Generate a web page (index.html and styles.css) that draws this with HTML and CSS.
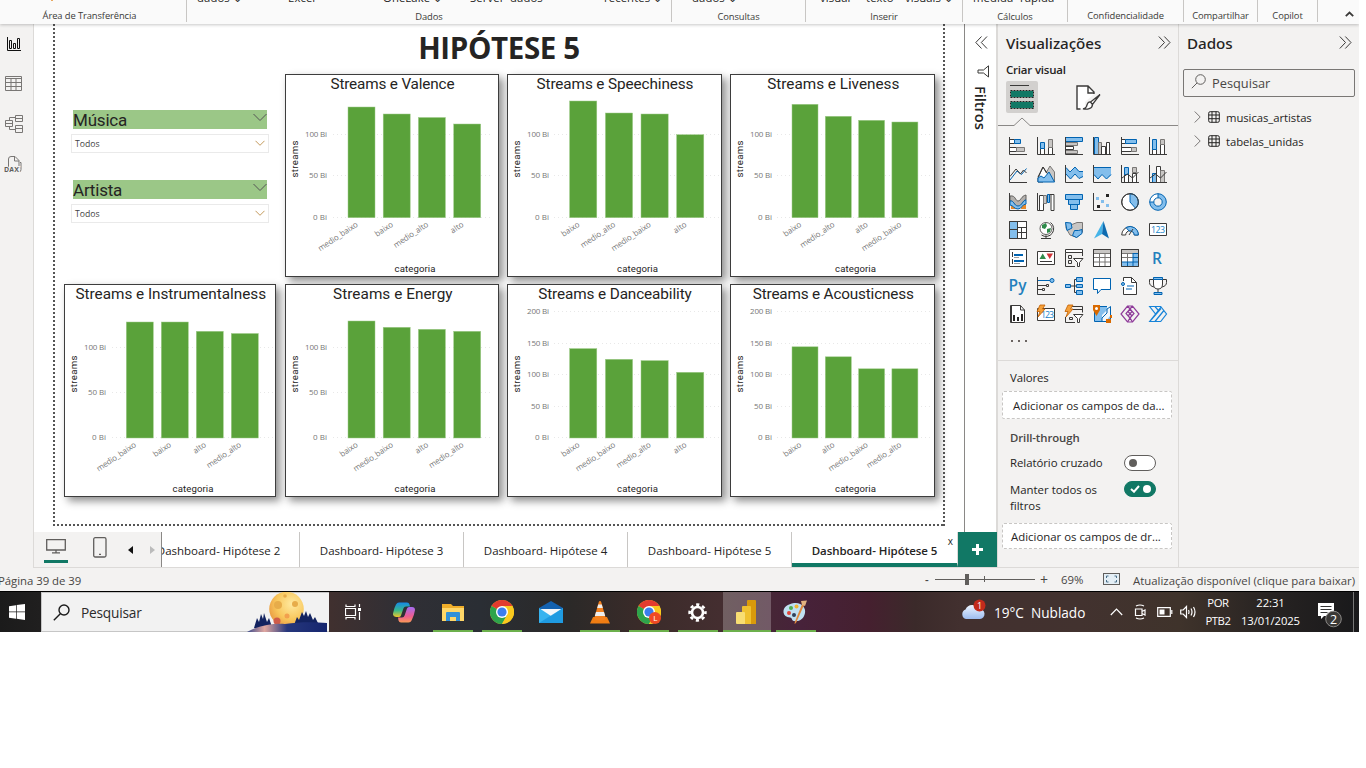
FILE: index.html
```html
<!DOCTYPE html>
<html lang="pt-BR">
<head>
<meta charset="utf-8">
<title>Dashboard - Hipótese 5</title>
<link rel="stylesheet" href="styles.css">
</head>
<body>
<div class="app">
  <header class="ribbon">
    <div class="group g1"><div class="cut"><i class="bit orange"></i></div><div class="gname">Área de Transferência</div></div>
    <div class="group g2"><div class="cut"><span>dados ⌄</span><span>Excel</span><span>OneLake ⌄</span><span>Server</span><span>dados</span><span>recentes ⌄</span></div><div class="gname">Dados</div></div>
    <div class="group g3"><div class="cut"><span>dados ⌄</span></div><div class="gname">Consultas</div></div>
    <div class="group g4"><div class="cut"><span>visual</span><span>texto</span><span>visuais ⌄</span></div><div class="gname">Inserir</div></div>
    <div class="group g5"><div class="cut"><span>medida</span><span>rápida</span></div><div class="gname">Cálculos</div></div>
    <div class="group g6"><div class="cut"></div><div class="gname">Confidencialidade</div></div>
    <div class="group g7"><div class="cut"></div><div class="gname">Compartilhar</div></div>
    <div class="group g8"><div class="cut"></div><div class="gname">Copilot</div></div>
    <svg class="collapse" width="9" height="6" viewBox="0 0 9 6"><path d="M.8 5.2 4.5 1.5 8.2 5.2" class="k2"/></svg>
  </header>

  <main class="work">
    <nav class="rail">
      <svg width="14" height="14" viewBox="0 0 14 14" class="rail-on"><path d="M.5 0V13.5H14M2.5 3.5h2v8h-2zM6.5 6.5h2v5h-2zM10.5 1.5h2v10h-2z"/></svg>
      <svg width="17" height="16" viewBox="0 0 17 16"><path d="M.5.5h16v14h-16zM.5 2.5h16M.5 6.5h16M.5 10.5h16M6 2.5v12M11 2.5v12"/></svg>
      <svg width="18" height="18" viewBox="0 0 18 18"><path d="M.5 5.5h7v6h-7zM.5 8.5h7M10.5.5h7v6h-7zM10.5 3.5h7M10.5 10.5h7v7h-7zM10.5 13.5h7M4.5 5.500V2.500h6M4.500 11.500v3h6"/></svg>
      <svg class="daxi" width="18" height="18" viewBox="0 0 18 18"><path d="M4.500 12V3q0-2.500 2.500-2.500h4l4 4V12M10.500.5V5h4.500M16 6.500h1v7q0 2.500-2 2.500"/><text x="0" y="16" class="dax" textLength="15">DAX</text></svg>
    </nav>

    <section class="center">
      <div class="stage">
        <div class="canvas">
          <div class="page">
            <h1>HIPÓTESE 5</h1>
            <div class="grid" id="grid">
              <div class="slicers">
                <div class="slicer"><div class="shead">Música<svg width="14" height="9" viewBox="0 0 14 9"><path d="M.5 1 7 7.500 13.500 1"/></svg></div><div class="sbox">Todos<svg width="10" height="7" viewBox="0 0 10 7"><path d="M.5.8 5 5.300 9.500.8"/></svg></div></div>
                <div class="slicer"><div class="shead">Artista<svg width="14" height="9" viewBox="0 0 14 9"><path d="M.5 1 7 7.500 13.500 1"/></svg></div><div class="sbox">Todos<svg width="10" height="7" viewBox="0 0 10 7"><path d="M.5.8 5 5.300 9.500.8"/></svg></div></div>
              </div>
            </div>
          </div>
        </div>
        <aside class="filters">
          <svg width="13" height="13" viewBox="0 0 13 13"><path d="M6.500.5.8 6.500l5.700 6M12 .5 6.300 6.500l5.700 6" class="k"/></svg>
          <svg class="funnel" width="13" height="13" viewBox="0 0 13 13"><path d="M11.500.8v11.200L6.500 8H1V5h5.500z" class="k"/></svg>
          <span>Filtros</span>
        </aside>
      </div>
      <div class="tabs">
        <div class="views">
          <svg class="desk" width="20" height="15" viewBox="0 0 20 15"><path d="M.7.7h18.600v10.300H.7zM10 11v2.500M6 13.800h8"/></svg>
          <svg class="phone" width="14" height="21" viewBox="0 0 14 21"><rect x=".7" y=".7" width="12.300" height="19.300" rx="1.500"/><path d="M6 17.300h2"/></svg>
          <svg class="prev" width="5" height="8" viewBox="0 0 5 8"><path d="M5 0v8L0 4z"/></svg>
          <svg class="next" width="5" height="8" viewBox="0 0 5 8"><path d="M0 0v8l5-4z"/></svg>
        </div>
        <div class="tab first"><span>Dashboard- Hipótese 2</span></div>
        <div class="tab">Dashboard- Hipótese 3</div>
        <div class="tab">Dashboard- Hipótese 4</div>
        <div class="tab">Dashboard- Hipótese 5</div>
        <div class="tab active">Dashboard- Hipótese 5<b>x</b></div>
        <div class="add"><svg width="11" height="11" viewBox="0 0 11 11"><path d="M5.500 0v11M0 5.500h11"/></svg></div>
      </div>
    </section>

    <aside class="viz">
      <div class="phead"><h2>Visualizações</h2><svg width="13" height="13" viewBox="0 0 13 13"><path d="M.8.5l5.700 6-5.700 6M6.300.5l5.700 6-5.700 6" class="k"/></svg></div>
      <h3>Criar visual</h3>
      <div class="modes">
        <div class="mode"><svg width="24" height="26" viewBox="0 0 24 26"><path d="M0 1.500h19" class="k"/><path d="M0 6h24v8H0zM0 17h24v8H0z" fill="#117865"/><path d="M.5 6.500h23v7H.5zM.5 17.500h23v7H.5z" fill="none" stroke="#d2d0ce"/><path d="M.5 6.500h23v7H.5zM.5 17.500h23v7H.5z" fill="none" stroke="#252423" stroke-dasharray="2 1"/></svg></div>
        <svg class="brush" width="25" height="25" viewBox="0 0 25 25"><path d="M1 1h11l6 6v2L9 17v7H1z" fill="#fff"/><path d="M4.500 24H1V1h11l6 6v2M12 1v7h6" class="k2"/><path d="M24 9.500 14.500 17l2 2.500zM14.500 17c-3-.5-3.500 3-4 4.500-.5 1.300-2 2-3.500 2.300 4 .8 9.500 0 9.500-4.300z" fill="#fff" stroke="#3b3a39" stroke-width="1.300"/></svg>
      </div>
      <svg class="caret" width="180" height="9" viewBox="0 0 180 9"><path d="M0 8.500h16l8-7.500 8 7.500h148" fill="none" stroke="#8a8886"/></svg>
      <div class="icons">
        <svg viewBox="0 0 18 18"><path class="w" d="M.5 2.500h5v4h-5zM.5 10.500h7v4h-7z"/><path class="b" d="M5.500 2.500h6v4h-6z"/><path class="g" d="M7.500 10.500h8v4h-8z"/><path class="k" d="M.5 0v17.500H18"/></svg>
        <svg viewBox="0 0 18 18"><path class="w" d="M3.500 11.500h4v6h-4zM11.500 10.500h4v7h-4z"/><path class="b" d="M3.500 5.500h4v6h-4z"/><path class="g" d="M11.500 2.500h4v8h-4z"/><path class="k" d="M.5 0v17.500H18"/></svg>
        <svg viewBox="0 0 18 18"><path class="w" d="M.5 9.500h8v3h-8z"/><path class="g" d="M.5 5.500h12v3H.5zM.5 13.500h12v3H.5z"/><path class="b" d="M.5.5h17v4H.5z"/><path class="k" d="M.5 0v17.500H18"/></svg>
        <svg viewBox="0 0 18 18"><path class="b" d="M1.500.5h4v17h-4z"/><path class="g" d="M5.500 5.500h3v12h-3z"/><path class="w" d="M8.500 9.500h4v8h-4zM13.500 5.500h3v12h-3z"/><path class="k" d="M.5 0v17.500H18"/></svg>
        <svg viewBox="0 0 18 18"><path class="w" d="M.5 2.500h4v4h-4zM.5 10.500h10v4H.5z"/><path class="b" d="M4.500 2.500h11v4h-11z"/><path class="g" d="M10.500 10.500h5v4h-5z"/><path class="k" d="M.5 0v17.500H18"/></svg>
        <svg viewBox="0 0 18 18"><path class="w" d="M3.500 12.500h4v5h-4zM11.500 7.500h4v10h-4z"/><path class="b" d="M3.500 2.500h4v10h-4z"/><path class="g" d="M11.500 2.500h4v5h-4z"/><path class="k" d="M.5 0v17.500H18"/></svg>

        <svg viewBox="0 0 18 18"><path class="bl" d="M1 15 8 6l4.500 3.500L17.500 3.500"/><path class="k" d="M1 11.500 7 4l4.500 5 3-4 3 3M.5 0v17.500H18"/></svg>
        <svg viewBox="0 0 18 18"><path class="g" d="M9 8l4-7 4.500 6v10z"/><path class="w" d="M1 13 6 2l6 9-6 6H1z"/><path class="b" d="M1 17V13l3-2 3 2 5-6 5.500 10z"/><path class="k" d="M1 12 6 2l3.500 6"/></svg>
        <svg viewBox="0 0 18 18"><path d="M1 2.500 5 7l5-5 4 4h4V12l-4 1-4-4-4.500 5L1 9.500z" fill="#83beec"/><path class="bl" d="M1 2.500 5 7l5-5 4 4.500h4M1 9l4.500 5L10 9l4 4.500 4-2"/><path class="k" d="M.5 0v17.500H18"/></svg>
        <svg viewBox="0 0 18 18"><path d="M1 2.500h17v8L13.500 14 9 9.500 5 14 1 10.500z" fill="#83beec"/><path class="bl" d="M1 2.500h17M1 9.500l4 4.500 4-4.500 4.500 4.500L18 9.500"/><path class="k" d="M.5 0v17.500H18"/></svg>
        <svg viewBox="0 0 18 18"><path class="w" d="M3.500 9.500h4v8h-4zM11.500 8.500h4v9h-4z"/><path class="b" d="M3.500 2.500h4v7h-4z"/><path class="g" d="M11.500 2.500h4v5h-4z"/><path class="k" d="M.5 0v17.500H18M1 13l5.500-4 5 4 6-6"/></svg>
        <svg viewBox="0 0 18 18"><path class="b" d="M3.500 8.500h4v9h-4z"/><path class="w" d="M7.500 1.500h4v16h-4z"/><path class="g" d="M11.500 5.500h4v12h-4z"/><path class="k" d="M.5 0v17.500H18M1 13l5.500-4 5 4 6-6"/></svg>

        <svg viewBox="0 0 18 18"><path d="M2 10h5v6H2zM12 10h5v6h-5z" fill="#e8892a"/><path d="M1 3c6-1 5 5 8 5s3-5 8-6v5c-4 0-4 7-8 7s-3-6-8-6z" fill="#b3b0ad" stroke="#605e5c"/><path d="M1 8c4-1 4 5 8 5s5-6 8-6v4c-4 0-4 5-8 5s-5-4-8-4z" fill="#83beec" stroke="#0063b1"/><path class="k" d="M.5 0v17.500H18"/></svg>
        <svg viewBox="0 0 18 18"><path class="w" d="M2.500 2.500h4v15h-4zM14 1.500h3v16h-3z"/><path class="g" d="M6.500 2.500h3v8h-3z"/><path class="b" d="M10.500 1.500h2v8h-2z"/><path class="k" d="M.5 0v17.500H3M12.500 1.500H14"/></svg>
        <svg viewBox="0 0 18 18"><path class="b" d="M.5 1.500h17v5H.5zM3.500 6.500h11v5h-11zM5.500 11.500h7v5h-7z"/></svg>
        <svg viewBox="0 0 18 18"><path d="M3 4h3v3H3zM8 7h3v3H8zM13 11h3v3h-3z" fill="#83beec"/><path d="M13 1h3v3h-3zM4 12h3v3H4z" fill="#252423"/><path class="k" d="M.5 0v17.500H18"/></svg>
        <svg viewBox="0 0 18 18"><circle class="w" cx="9" cy="9" r="8.300"/><path class="b" d="M9 .7A8.300 8.300 0 0 1 14.500 15.200L9 9z"/><circle class="k" cx="9" cy="9" r="8.300"/></svg>
        <svg viewBox="0 0 18 18"><circle cx="9" cy="9" r="6.300" fill="none" stroke="#83beec" stroke-width="4"/><path d="M2.700 9A6.300 6.300 0 0 1 9 2.700" fill="none" stroke="#fff" stroke-width="4"/><circle class="bl" cx="9" cy="9" r="8.300"/><circle class="bl" cx="9" cy="9" r="4.200"/><path class="bl" d="M.7 9h4M9 .7v4"/></svg>

        <svg viewBox="0 0 18 18"><path class="w" d="M.5.5h17v17H.5z"/><path d="M1 1h7v7H1zM1 9h7v8H1z" fill="#83beec"/><path class="k" d="M.5.5h17v17H.5zM8.500.5v17M.5 8.500h8M8.500 6.500h9M8.500 11.500h9M12.500 6.500v11"/></svg>
        <svg viewBox="0 0 18 18"><circle cx="9" cy="7.500" r="6" fill="#fff" stroke="#605e5c"/><path d="M5 4l4-2 1 3-2 3-3-1zM10 8l4-1-1 4-3 1z" fill="#2f8b4a"/><path class="k" d="M13.500 1.500a7.500 7.500 0 0 1-9 12.500M9 14.500V17M4 17.500h10"/></svg>
        <svg viewBox="0 0 18 18"><path d="M1 1.500l6 2 5-2h5.500V11L12 16.500 5 14 1 7z" class="g"/><path class="b" d="M.5 1.500 6 2l1 5-5 2.500zM9.500 9.500h4l3.500-1v4l-5.500 4-4-2z"/></svg>
        <svg viewBox="0 0 18 18"><path d="M10.500 0 1 17.500l8-4.500z" fill="#46b4e8"/><path d="M10.500 0 16 17.500 9 13z" fill="#0e6bb0"/></svg>
        <svg viewBox="0 0 18 18"><path class="w" d="M.7 14a8.300 8.300 0 0 1 16.600 0h-4a4.300 4.300 0 0 0-8.600 0z"/><path class="b" d="M5 6.500A8.300 8.300 0 0 1 17.300 14h-4A4.300 4.300 0 0 0 8 10z"/><path class="k" d="M8 14l4-6"/></svg>
        <svg viewBox="0 0 18 18"><path class="w" d="M.5 2.500h17v12H.5z"/><text x="9" y="12" class="num" textLength="14">123</text></svg>

        <svg viewBox="0 0 18 18"><path class="w" d="M.5.5h17v17H.5z"/><path d="M3.500 3v5M3.500 10v5" class="k"/><path d="M5 5h9v2H5zM5 11h10v2H5z" fill="#0063b1"/><path d="M5 8.500h5M5 14.500h6" class="k" opacity=".5"/></svg>
        <svg viewBox="0 0 18 18"><path class="w" d="M.5 2.500h17v13H.5z"/><path d="M2.500 10 5.700 4.500 9 10z" fill="#2f8b4a"/><path d="M9.500 4.500h6.500L12.700 10z" fill="#d13438"/><path d="M3 12.500h12" class="k"/></svg>
        <svg viewBox="0 0 18 18"><path class="w" d="M.5.500h17v3H.5z"/><path class="k" d="M.5 3.500v14H10M17.500 3v4M3.500 6.500h3v3h-3zM3.500 11.500h3v3h-3z"/><path d="M8.500 9.500h9.500l-3.500 4v4h-2v-4z" class="w"/></svg>
        <svg viewBox="0 0 18 18"><path class="w" d="M.5.5h17v17H.5z"/><path d="M1 1h16v3H1z" fill="#c8c6c4"/><path class="k" d="M.5.5h17v17H.5z"/><path d="M1 4.500h16M1 8.500h16M1 13h16M6.500 4v13M12 4v13" stroke="#797775"/></svg>
        <svg viewBox="0 0 18 18"><path class="w" d="M.5.5h17v17H.5z"/><path d="M1 1h16v3H1z" fill="#c8c6c4"/><path d="M12 4h5v13H1v-4h11z" fill="#83beec"/><path d="M1 4.500h11M1 8.500h11M6.500 4v9" stroke="#797775"/><path d="M12 4.500h5M12 8.500h5M1 13h16M6.500 13v4M12 4v13" stroke="#0063b1"/><path class="k" d="M.5.5h17v17H.5z"/></svg>
        <svg viewBox="0 0 18 18"><text x="8" y="15" class="letter" textLength="9">R</text></svg>

        <svg viewBox="0 0 18 18"><text x="8.500" y="13.500" class="letter" textLength="18">Py</text></svg>
        <svg viewBox="0 0 18 18"><path class="bl" d="M1 3.500h12"/><circle class="b" cx="15" cy="3.500" r="2"/><path class="k" d="M.5 0v17.500H18M1 8.500h8M9.500 7.500h2v2h-2zM1 12.500h4M5.500 11.500h2v2h-2z"/></svg>
        <svg viewBox="0 0 18 18"><path class="k" d="M6 9h3M12 2.500H9.500v13H12M9 9h3"/><path class="b" d="M.5 7.500h5v3h-5zM11.500.5h6v4h-6zM11.500 7.500h6v3h-6zM11.500 13.500h6v4h-6z"/></svg>
        <svg viewBox="0 0 18 18"><path d="M.5 1.500h17v11H8L4.500 16.500v-4h-4z" fill="#fff" stroke="#0063b1"/></svg>
        <svg viewBox="0 0 18 18"><path d="M2.500.5h8l5 5v12h-13z" fill="#fff"/><path class="k" d="M2.500 4V.5h8l5 5v12h-13V10M10.500.5v5h5"/><circle class="b" cx="2" cy="7" r="1.500"/><path class="bl" d="M6 9h7M5 12h6"/></svg>
        <svg viewBox="0 0 18 18"><path class="k" d="M4.500 2.500h-4v3q0 3.500 4.500 4.500M13.500 2.500h4v3q0 3.500-4.500 4.500M9 12v4"/><path class="w" d="M4.500 1h9v6q0 5-4.500 5T4.500 7z"/><path class="b" d="M4.500.5h9v2h-9zM5 15.500h8v2H5z"/></svg>

        <svg viewBox="0 0 18 18"><path class="w" d="M1.500.5h10l4 4.500v12.500h-14z"/><path class="k" d="M11.500.5V5h4M2.500 1v16"/><path d="M4 10h2v6H4zM8 12h2v4H8zM12 9h2v7h-2z" fill="#252423"/></svg>
        <svg viewBox="0 0 18 18"><path class="w" d="M.5 3.500h17v12H.5z"/><text x="10.500" y="13" class="num" textLength="13">123</text><path class="o" d="M3 0h5L5.500 4H8L1 12l2-5.500H0z"/></svg>
        <svg viewBox="0 0 18 18"><path class="k" d="M4 1.500h13.500v6M.5 12v5.500H10M8 4.500h9M4.500 12.500h3v2h-3z"/><path d="M8.500 9.500h9.500l-3.500 4v4h-2v-4z" class="w"/><path class="o" d="M3 0h5L5.500 4H8L1 12l2-5.500H0z"/></svg>
        <svg viewBox="0 0 18 18"><path class="b" d="M1.500 1.500h16v15h-16z"/><path d="M14 1v4l-5 5v6h4l4-5V1z" fill="#eef6fc"/><path d="M9 16v-3l5-5V4l3-2" class="bl"/><path d="M0 0h7v5L3.500 11 0 5z" fill="#d96a00"/><circle cx="3.500" cy="3.500" r="1.500" fill="#fff"/><path d="M17 10h2v3h-2zM13 14h5v4h-5z" fill="#d96a00"/></svg>
        <svg viewBox="0 0 18 18"><path d="M6.500 1h5L18 9l-6.500 8h-5L0 9zM9 4l4 4.500-4 4.500-4-4.500zM6.500 1 9 4l2.500-3M6.500 17 9 13l2.500 4M7 6.500l4 4.500M11 6.500 7 11" fill="none" stroke="#8e3a99" stroke-width="1.200"/></svg>
        <svg viewBox="0 0 18 18"><path d="M.7 1.500h11L17.500 9l-5.800 7.500H.7L6.500 9zM6.500 9l5.500-7M2 15 12 3.500M6 16.500 14.500 6M.700 1.500 6 1.500 9 5" fill="none" stroke="#1683d8" stroke-width="1.200"/></svg>
      </div>
      <div class="more"><i></i><i></i><i></i></div>
      <div class="fields">
        <p class="lab">Valores</p>
        <div class="well">Adicionar os campos de da...</div>
        <p class="lab bold">Drill-through</p>
        <div class="trow"><span>Relatório cruzado</span><div class="toggle"></div></div>
        <div class="trow second"><span>Manter todos os<br>filtros</span><div class="toggle on"><svg width="10" height="8" viewBox="0 0 10 8"><path d="M1 4l3 2.700L9 1"/></svg></div></div>
        <div class="well low">Adicionar os campos de dr...</div>
      </div>
    </aside>

    <aside class="data">
      <div class="phead"><h2>Dados</h2><svg width="13" height="13" viewBox="0 0 13 13"><path d="M.8.5l5.700 6-5.700 6M6.300.5l5.700 6-5.700 6" class="k"/></svg></div>
      <div class="search"><svg width="15" height="15" viewBox="0 0 15 15"><circle cx="9.500" cy="5.500" r="4.800"/><path d="M6 9 .8 14.200"/></svg>Pesquisar</div>
      <div class="tbl"><svg class="chev" width="7" height="12" viewBox="0 0 7 12"><path d="M.7.5 6.200 6 .7 11.500"/></svg><svg width="12" height="12" viewBox="0 0 12 12"><rect x=".7" y=".7" width="10.600" height="10.600" rx="1.500"/><path d="M.7 4h10.600M.7 7.700h10.600M4 .7v10.600M8 .7v10.600"/></svg>musicas_artistas</div>
      <div class="tbl"><svg class="chev" width="7" height="12" viewBox="0 0 7 12"><path d="M.7.5 6.200 6 .7 11.500"/></svg><svg width="12" height="12" viewBox="0 0 12 12"><rect x=".7" y=".7" width="10.600" height="10.600" rx="1.500"/><path d="M.7 4h10.600M.7 7.700h10.600M4 .7v10.600M8 .7v10.600"/></svg>tabelas_unidas</div>
    </aside>
  </main>

  <footer class="status">
    <span class="pg">Página 39 de 39</span>
    <div class="zoom"><b>-</b><svg width="100" height="12" viewBox="0 0 100 12"><path d="M0 6.500h100M49.500 3v6" stroke="#605e5c"/><path d="M30 1h4v11h-4z" fill="#605e5c"/></svg><b class="plus">+</b><span class="pct">69%</span>
    <svg class="fit" width="17" height="12" viewBox="0 0 17 12"><rect x=".5" y=".5" width="16" height="11" fill="#e4eff6" stroke="#605e5c"/><path d="M3.500 5V3h2M11.500 3h2v2M3.500 7v2h2M11.500 9h2V7" fill="none" stroke="#4a6f88"/></svg></div>
    <span class="upd">Atualização disponível (clique para baixar)</span>
  </footer>

  <div class="taskbar">
    <div class="start"><svg width="16" height="16" viewBox="0 0 16 16"><path d="M0 2.200 7 1.200V7.600H0zM7.700 1.100 16 0v7.600H7.700zM0 8.300h7v6.500l-7-1zM7.700 8.300H16V16l-8.300-1.200z" fill="#fff"/></svg></div>
    <div class="tsearch"><svg width="17" height="17" viewBox="0 0 17 17"><circle cx="11" cy="6" r="5"/><path d="M7.300 9.700.8 16.200"/></svg><span>Pesquisar</span>
      <svg class="moon" width="80" height="40" viewBox="0 0 80 40">
        <defs><radialGradient id="mg" cx=".65" cy=".35" r=".75"><stop offset="0" stop-color="#ffe9a0"/><stop offset=".6" stop-color="#f8c75c"/><stop offset="1" stop-color="#e8963f"/></radialGradient>
        <linearGradient id="hill"><stop offset="0" stop-color="#39498c"/><stop offset=".22" stop-color="#e0a7a0"/><stop offset=".5" stop-color="#26377c"/><stop offset="1" stop-color="#15256e"/></linearGradient></defs>
        <circle cx="39.500" cy="17" r="17.300" fill="url(#mg)"/>
        <g fill="#e7ac4a"><circle cx="31" cy="13" r="4"/><circle cx="48" cy="12" r="3"/><circle cx="38" cy="4" r="1.800"/><circle cx="40" cy="24" r="2.500" fill="#f2a04e"/><circle cx="30" cy="29" r="3.500" fill="#cf5b48"/></g>
        <path d="M7 36l3-10 2 4 2-8 2 5 1-6 3 9 2-4 4 12zM47 33l3-8 2 3 3-8 2 4 2-5 2 6 2-4 3 7 2-3 5 10z" fill="#132360"/>
        <path d="M0 40c12-7 27-9 38-8 14-2 28-2 42-1v9z" fill="url(#hill)"/>
      </svg>
    </div>
    <div class="apps">
      <div class="tk wide"><svg width="17" height="16" viewBox="0 0 17 16"><path d="M1 .5v2h9v-2M1 15.500v-2h9v2M.5 4.500h10v7H.5zM14.500 0v3M14.500 8v8" fill="none" stroke="#fff" stroke-width="1.200"/><path d="M13 4h3v3h-3z" fill="#fff"/></svg></div>
      <div class="tk"><svg width="22" height="21" viewBox="0 0 22 21"><defs><linearGradient id="c1" x2="0" y2="1"><stop offset="0" stop-color="#158ae8"/><stop offset=".55" stop-color="#39b88a"/><stop offset="1" stop-color="#f0c528"/></linearGradient><linearGradient id="c2" x2="0" y2="1"><stop offset="0" stop-color="#a46cf3"/><stop offset=".6" stop-color="#ee5d90"/><stop offset="1" stop-color="#fb9a57"/></linearGradient></defs><path d="M6 .5h8q2 0 2.500 2l.5 2h-4q-2 0-2.600 2L8 13.500Q7.500 15 5.500 15H3Q0 15-.1 12 1 6 3 2.500 4 .5 6 .5z" fill="url(#c1)"/><path d="M16 5h3q3 0 3 3-1 6-3 9.500-1 3-3.500 3H8q-2 0-2.500-2L5 15.500h4q2 0 2.600-2L14 6.500Q14.500 5 16 5z" fill="url(#c2)"/></svg></div>
      <div class="tk run"><svg width="22" height="19" viewBox="0 0 22 19"><path d="M0 1h9l2 2h11v15H0z" fill="#f0ae2a"/><path d="M0 5h22v13H0z" fill="#ffd768"/><path d="M4 10q0-1 1-1h12q1 0 1 1v8h-4v-4H8v4H4z" fill="#3191d8"/></svg></div>
      <div class="tk run"><svg width="24" height="24" viewBox="0 0 24 24"><use href="#chr"/></svg></div>
      <div class="tk"><svg width="24" height="22" viewBox="0 0 24 22"><path d="M0 7 12 0l12 7v4H0z" fill="#1462b0"/><path d="M2 8h20v8H2z" fill="#f4f7fa"/><path d="M0 7l12 8 12-8v15H0z" fill="#37b3ef"/><path d="M0 22 24 7v15z" fill="#1592dc" opacity=".7"/></svg></div>
      <div class="tk run"><svg width="20" height="23" viewBox="0 0 20 23"><path d="M3 16h14l3 6.500H0z" fill="#f07d12"/><path d="M10 0q1 0 1.200 1L16 18q-6 3-12 0L8.800 1Q9 0 10 0z" fill="#f58220"/><path d="M8.200 3.500h3.600l1 3.500H7.200zM6 11h8l1.200 4H4.800z" fill="#eee"/></svg></div>
      <div class="tk run"><svg width="24" height="24" viewBox="0 0 24 24"><g id="chr"><circle cx="12" cy="12" r="12" fill="#f9c91e"/><path d="M12 12 1.600 6A12 12 0 0 1 22.400 6z" fill="#e33b2e"/><path d="M12 12 1.600 6A12 12 0 0 0 12 24l5.200-9z" fill="#2ea44c"/><path d="M12 6h10.400A12 12 0 0 1 12 24l5-9z" fill="#f9c91e"/><circle cx="12" cy="12" r="6" fill="#fff"/><circle cx="12" cy="12" r="4.600" fill="#3b7ded"/></g><circle cx="18" cy="18" r="6" fill="#f04a24"/><text x="16.300" y="21" fill="#fff" font-size="8">L</text></svg></div>
      <div class="tk run"><svg width="19" height="19" viewBox="0 0 19 19"><circle cx="9.500" cy="9.500" r="5.500" fill="none" stroke="#fff" stroke-width="2.600"/><circle cx="9.500" cy="9.500" r="7.900" fill="none" stroke="#fff" stroke-width="2.600" stroke-dasharray="3.200 3.005" stroke-dashoffset="1.600"/></svg></div>
      <div class="tk run on"><svg width="20" height="24" viewBox="0 0 20 24"><path d="M11 1q0-1 1-1h7q1 0 1 1v23h-9z" fill="#d99a0b"/><path d="M6 7q0-1 1-1h7q1 0 1 1v17H6z" fill="#efc12f"/><path d="M0 13q0-1 1-1h7q1 0 1 1v11H1q-1 0-1-1z" fill="#f8de72"/></svg></div>
      <div class="tk run"><svg width="25" height="24" viewBox="0 0 25 24"><path d="M11 3c8-1 12 5 11 10-1 6-6 9-11 8-3-.5-1-3-4-3.500-4-.5-6-2-6.500-5C0 7 5 4 11 3z" fill="#bfe0f2"/><circle cx="6" cy="13" r="2" fill="#e2453a"/><circle cx="8" cy="8" r="2" fill="#4fae51"/><circle cx="13.500" cy="6.500" r="2" fill="#f2b632"/><circle cx="11" cy="15" r="2" fill="#30405a"/><path d="M21.500 4 13 23l-1.500 1 .5-2.500L19.500 3z" fill="#e0893c"/><path d="M18 1l6-.5L22 6l-3-1z" fill="#e2b17f"/></svg></div>
    </div>
    <div class="tray">
      <svg class="cloud" width="25" height="23" viewBox="0 0 25 23"><defs><linearGradient id="cl" x2="0" y2="1"><stop offset="0" stop-color="#eef5ff"/><stop offset="1" stop-color="#9dbcf0"/></linearGradient></defs><path d="M5 20a5 5 0 0 1-.5-9.500A7.500 7.500 0 0 1 18 10a5 5 0 0 1 1 10z" fill="url(#cl)"/><circle cx="18.500" cy="6.500" r="6" fill="#c42b1c"/><text x="16" y="10" fill="#fff" font-size="9">1</text></svg>
      <span class="temp">19°C&nbsp; Nublado</span>
      <svg class="up" width="13" height="8" viewBox="0 0 13 8"><path d="M.8 7 6.500 1.200 12.200 7"/></svg>
      <svg class="meet" width="13" height="16" viewBox="0 0 13 16"><path d="M2 2Q6 0 10 2M2 14Q6 16 10 14M1.500 5h6.500v6.500H1.500zM8 7.500l3-1.500v5L8 9.500"/></svg>
      <svg class="bat" width="16" height="10" viewBox="0 0 16 10"><path d="M.7.7h12.600v8.600H.7zM14.800 3v4"/><path d="M2.500 2.500h5v5h-5z" fill="#fff" stroke="none"/></svg>
      <svg class="vol" width="17" height="14" viewBox="0 0 17 14"><path d="M.7 5h2.500L6.500 1.500v11L3.200 9H.7zM8.500 5q1 2 0 4M11 3.500q2 3.500 0 7M13.500 2q3 5 0 10"/></svg>
      <div class="two lang"><span>POR</span><span>PTB2</span></div>
      <div class="two time"><span>22:31</span><span>13/01/2025</span></div>
      <div class="note"><svg width="24" height="25" viewBox="0 0 24 25"><path d="M0 0h16v13H6l-3 3v-3H0z" fill="#fff"/><path d="M2.500 3.500h11M2.500 6.500h11M2.500 9.500h7" stroke="#333"/><circle cx="15.500" cy="16" r="7.800" fill="#3a3836" stroke="#8a8886"/><text x="12" y="20.500" fill="#fff" font-size="12.500">2</text></svg></div>
    </div>
  </div>
</div>
<script src="charts.js"></script>
</body>
</html>
```
FILE: styles.css
```css
* { box-sizing: border-box; }
body { margin: 0; background: #fff; font-family: "Open Sans", "Noto Sans", sans-serif; color: #252423; overflow: hidden; }
h1, h2, h3, p { margin: 0; }
svg { display: block; flex: none; }
.k { fill: none; stroke: #3b3a39; }
.k2 { fill: none; stroke: #3b3a39; stroke-width: 1.4; }
.app { width: 1359px; height: 632px; display: flex; flex-direction: column; overflow: hidden; }

.ribbon { height: 24px; flex: none; display: flex; background: #fafafa; box-shadow: 0 1px 3px rgba(0,0,0,.22); position: relative; z-index: 2; }
.group { height: 22px; border-right: 1px solid #c8c6c4; display: flex; flex-direction: column; flex: none; }
.cut { height: 8px; display: flex; font-size: 11.300px; line-height: 14px; white-space: nowrap; }
.cut span { margin-top: -9px; height: 14px; letter-spacing: .1px; }
.gname { font-size: 9.400px; line-height: 12px; margin-top: 4px; padding-top: 1.500px; text-align: center; color: #3b3a39; white-space: nowrap; letter-spacing: -.1px; }
.bit { width: 2px; height: 1px; margin-left: 51px; background: #e8a860; }
.g1 { width: 187px; } .g1 .gname { margin-left: -7px; }
.g2 { width: 485px; }
.g2 span:nth-child(1) { margin-left: 10px; width: 91px; }
.g2 span:nth-child(2) { width: 95px; }
.g2 span:nth-child(3) { width: 87px; }
.g2 span:nth-child(4) { width: 40px; }
.g2 span:nth-child(5) { width: 94px; }
.g3 { width: 134px; } .g3 span { margin-left: 20px; }
.g4 { width: 157px; }
.g4 span:nth-child(1) { margin-left: 14px; width: 46px; }
.g4 span:nth-child(2) { width: 39px; }
.g5 { width: 105px; }
.g5 span:nth-child(1) { margin-left: 10px; width: 47px; }
.g6 { width: 116px; } .g7 { width: 74px; } .g8 { width: 60px; }
.collapse { margin: 11px 0 0 27px; }
.collapse .k2 { stroke-width: 1.8; }

.work { height: 544px; flex: none; display: flex; }
.rail { width: 34px; background: #f3f2f1; border-right: 1px solid #dcdad8; display: flex; flex-direction: column; align-items: flex-start; padding: 13px 0 0 5px; gap: 23px; }
.rail svg { fill: none; stroke: #797775; }
.rail svg.rail-on { stroke: #111; margin-left: 2px; margin-bottom: 2px; }
.rail svg.daxi { margin-left: -1px; }
.rail .dax { font-size: 7px; font-weight: 700; fill: #605e5c; stroke: #f3f2f1; stroke-width: 2px; paint-order: stroke; }
.center { width: 963px; display: flex; flex-direction: column; }
.stage { height: 508px; display: flex; }
.canvas { width: 930px; padding-left: 19px; }
.page { width: 892px; height: 502px; padding-left: 11px;
  background:
    repeating-linear-gradient(180deg, #555 0 2px, transparent 2px 4px) 0 0 / 2px 100% no-repeat,
    repeating-linear-gradient(180deg, #555 0 2px, transparent 2px 4px) 100% 0 / 2px 100% no-repeat,
    repeating-linear-gradient(90deg, #555 0 2px, transparent 2px 4px) 0 100% / 100% 2px no-repeat; }
.page h1 { height: 50px; font-size: 29.500px; line-height: 48px; text-align: center; font-weight: 700; letter-spacing: -.35px; padding-right: 11px; }
.grid { display: grid; grid-template-columns: 221px 222px 223px 205px; grid-template-rows: 210px 214px; margin-top: -.5px; }
.card { border: 1px solid #3d3d3d; background: #fff; box-shadow: 4px 4px 8px rgba(0,0,0,.45); overflow: hidden; }
.card svg { margin: -1px; }
.card text { font-family: Roboto, sans-serif; }
.ct { font-size: 15.300px; fill: #252423; text-anchor: middle; }
.ax { font-size: 9.600px; fill: #252423; text-anchor: middle; }
.card .tk1 { font-size: 8px; fill: #777; text-anchor: end; font-family: "Open Sans", sans-serif; }
.gl { stroke: #e8e8e8; stroke-dasharray: 1 3; }
.bar { fill: #5aa23a; stroke: #9fcb8a; stroke-width: .5; }
.slicers { padding: 36px 0 0 7px; }
.slicer { width: 198px; height: 70px; }
.shead { width: 194px; height: 19px; margin: 0 2px; background: #9bc787; font: 17px/20px Roboto, sans-serif; letter-spacing: -.2px; display: flex; justify-content: space-between; }
.shead svg { margin-top: 3px; fill: none; stroke: #555; }
.sbox { height: 19px; margin-top: 5px; border: 1px solid #eaeaea; font-size: 8.700px; line-height: 18px; color: #444; padding: 1px 3px 0; display: flex; justify-content: space-between; align-items: center; }
.sbox svg { fill: none; stroke: #c49a5c; }
.filters { width: 33px; border-left: 1px solid #8a8886; border-right: 1px solid #dcdad8; display: flex; flex-direction: column; align-items: center; padding: 12px 0 0 1px; }
.funnel { margin: 16px 0 0 4px; }
.filters span { writing-mode: vertical-rl; font-weight: 600; font-size: 14.800px; line-height: 20px; margin-top: 8px; letter-spacing: -.1px; }

.tabs { height: 36px; display: flex; border-bottom: 1px solid #dcdad8; }
.views { width: 128px; border-right: 1px solid #8a8886; display: flex; align-items: flex-start; background: linear-gradient(#117865, #117865) 10px 28px / 24px 3px no-repeat #f3f2f1; }
.views svg { fill: none; stroke: #605e5c; stroke-width: 1.300; }
.desk { margin: 7px 0 0 12px; }
.phone { margin: 5px 0 0 27px; }
.views .prev { margin: 14px 0 0 21px; fill: #111; stroke: none; }
.views .next { margin: 14px 0 0 17px; fill: #bbb; stroke: none; }
.tab { width: 164px; border-right: 1px solid #c8c6c4; font-size: 11.500px; line-height: 37px; text-align: center; white-space: nowrap; overflow: hidden; position: relative; letter-spacing: 0; }
.tab.first { width: 138px; } .tab.first span { margin-left: -24px; }
.tab.active { width: 166px; font-weight: 600; border-bottom: 4px solid #117865; border-right-color: #dcdad8; letter-spacing: -.05px; }
.tab.active b { position: absolute; right: 4px; top: 1px; font-size: 10px; line-height: 17px; font-weight: 400; }
.add { width: 39px; background: #117865; display: flex; align-items: center; justify-content: center; padding-bottom: 1px; }
.add svg { stroke: #fff; stroke-width: 3; }

.viz { width: 182px; flex: none; background: #f3f2f1; border-right: 1px solid #dcdad8; border-left: 1px solid #dcdad8; border-bottom: 1px solid #dcdad8; padding-top: 9px; }
.phead { display: flex; justify-content: space-between; align-items: center; height: 20px; padding: 0 7px 0 8px; }
.phead h2 { font-size: 15.200px; line-height: 20px; font-weight: 500; font-family: "Noto Sans", sans-serif; letter-spacing: -.05px; }
.phead svg { margin-top: -1px; }
.viz h3 { font-size: 11.500px; font-weight: 600; line-height: 16px; margin: 9px 0 0 8px; letter-spacing: -.2px; }
.modes { display: flex; height: 32px; margin: 3px 0 0 8px; }
.mode { width: 32px; height: 32px; background: #d2d0ce; border-radius: 2px; padding: 3px 4px; }
.brush { margin: 4px 0 0 38px; }
.caret { margin-top: 4px; }
.icons { display: grid; grid-template-columns: repeat(6, 28px); grid-auto-rows: 28px; margin: 11px 0 0 11px; }
.icons svg { width: 18px; height: 18px; overflow: visible; }
.b { fill: #83beec; stroke: #0063b1; } .bl { fill: none; stroke: #0063b1; }
.w { fill: #fff; stroke: #3b3a39; } .g { fill: #c8c6c4; stroke: #797775; }
.o { fill: #f5a13a; stroke: #c25e00; stroke-width: .8; }
.num { font-size: 8.800px; fill: #1683c8; text-anchor: middle; }
.letter { font-size: 15.500px; font-weight: 600; fill: #2380bd; text-anchor: middle; }
.more { display: flex; gap: 5px; padding: 7px 0 0 13px; height: 27px; }
.more i { width: 2px; height: 2px; background: #6b6562; }
.fields { border-top: 1px solid #dcdad8; padding: 9px 6px 0 4px; font-size: 11.400px; }
.lab { line-height: 16px; padding-left: 8px; letter-spacing: -.1px; }
.lab.bold { font-weight: 600; color: #484644; margin-top: 11px; }
.well { height: 28px; margin-top: 5px; border: 1px dashed #c8c6c4; background: #fff; border-radius: 2px; line-height: 27px; padding-left: 10px; white-space: nowrap; }
.well.low { height: 26px; margin-top: 9px; line-height: 25px; padding-left: 8px; }
.trow { display: flex; justify-content: space-between; padding: 0 16px 0 8px; margin-top: 9px; line-height: 16px; letter-spacing: -.05px; }
.trow.second { margin-top: 11px; letter-spacing: 0; }
.toggle { width: 32px; height: 16px; border: 1px solid #605e5c; border-radius: 8px; background: #fff; display: flex; align-items: center; padding-left: 4px; }
.toggle::after { content: ""; width: 8px; height: 8px; border-radius: 50%; background: #605e5c; }
.toggle.on { background: #117865; border-color: #117865; padding-left: 5px; gap: 3px; margin-top: -1px; }
.toggle.on::after { background: #fff; }
.toggle svg { fill: none; stroke: #fff; stroke-width: 2; }

.data { width: 180px; flex: none; background: #f3f2f1; border-bottom: 1px solid #dcdad8; padding-top: 9px; }
.search { height: 28px; width: 172px; margin: 16px 0 8px 4px; border: 1px solid #797775; border-radius: 2px; display: flex; align-items: center; gap: 6px; padding: 0 0 1px 7px; font-size: 12.800px; color: #484644; }
.search svg { fill: none; stroke: #605e5c; margin-top: -2px; }
.tbl { display: flex; height: 24px; align-items: center; padding-left: 15px; font-size: 11.300px; gap: 6px; letter-spacing: -.05px; }
.tbl svg { fill: none; stroke: #252423; } .tbl .chev { stroke: #797775; margin-right: 1px; }
.data .phead { padding-left: 8px; }

.status { height: 24px; flex: none; background: #f3f2f1; border-bottom: 1px solid #000; display: flex; align-items: center; font-size: 11.400px; color: #484644; white-space: nowrap; }
.pg { width: 924px; margin-left: -2px; padding-top: 1px; letter-spacing: -.05px; }
.zoom { display: flex; align-items: center; width: 211px; padding-left: 3px; flex: none; }
.zoom svg { margin-top: -1px; }
.zoom b { font-weight: 600; width: 10px; } .zoom .plus { margin-left: 5px; font-weight: 400; font-size: 14px; width: 21px; line-height: 14px; }
.pct { width: 42px; }
.upd { padding-top: 2px; }

.taskbar { height: 40px; flex: none; display: flex; color: #fff; background: linear-gradient(90deg, #1b1b1b 0, #201f1f 40px, #40302f 330px, #302f35 400px, #2a2e34 480px, #2b2928 570px, #3a2b29 640px, #442e30 720px, #47223a 800px, #45202f 870px, #3b2a2a 915px, #42302f 960px, #42322f 1080px, #3f332b 1180px, #272322 1270px, #19191b 1359px); }
.start { width: 41px; display: flex; align-items: center; justify-content: center; padding-right: 7px; }
.tsearch { width: 288px; background: #f2f2f2; border: 1px solid #c6c6c6; border-right: 0; color: #2b2b2b; display: flex; align-items: center; font-size: 13.700px; padding-left: 11px; letter-spacing: -.2px; }
.tsearch svg { fill: none; stroke: #1b1b1b; stroke-width: 1.400; }
.tsearch span { margin-left: 11px; width: 158px; flex: none; }
.tsearch .moon { margin-left: 8px; }
.moon * { stroke: none; }
.apps { display: flex; }
.tk { width: 49px; display: flex; align-items: center; justify-content: center; background: linear-gradient(#6cb04c, #6cb04c) center bottom / 0 2px no-repeat; }
.tk.wide { width: 50px; padding-right: 2px; }
.tk.run { background-size: 40px 2px; }
.tk.on { background-color: rgba(255,255,255,.24); background-size: 48px 2px; width: 48px; margin-left: 1px; padding-right: 2px; }
.tray { flex: 1; display: flex; align-items: center; padding-left: 141px; font-size: 13.600px; }
.tray svg text { font-family: "Open Sans", sans-serif; }
.up, .meet, .bat, .vol { fill: none; stroke: #fff; stroke-width: 1.200; }
.cloud { margin-top: -3px; }
.temp { margin-left: 8px; width: 116px; white-space: nowrap; letter-spacing: 0; flex: none; }
.meet { margin-left: 11px; } .bat { margin-left: 10px; } .vol { margin-left: 7px; }
.two { display: flex; flex-direction: column; text-align: center; font-size: 11.300px; line-height: 17.500px; margin-top: -1px; flex: none; letter-spacing: -.1px; }
.lang { width: 42px; } .time { width: 63px; }
.lang { letter-spacing: -.4px; }
.note { margin-left: 16px; width: 36px; height: 40px; border-right: 1px solid #777; padding-top: 11px; }
```
FILE: charts.js
```js
// Column charts: geometry is in card-local pixels.
const cols = {
  a: { w: 212, tick: 42, grid: [48, 210], bars: [62.3, 97.3, 132.3, 167.3], bw: 27, ax: 129 },
  b: { w: 214, tick: 42, grid: [48, 206], bars: [63, 98.2, 133.4, 168.7], bw: 27, ax: 130 },
  c: { w: 215, tick: 42, grid: [47, 212], bars: [62.6, 98.4, 134, 169.6], bw: 27.2, ax: 130.500 },
  d: { w: 205, tick: 42, grid: [47, 203], bars: [62, 95.300, 128.600, 161.900], bw: 26, ax: 125.500 }
};
const three = [['100 Bi', 60.200], ['50 Bi', 101.800], ['0 Bi', 143.300]];
const threeB = [['100 Bi', 63.600], ['50 Bi', 108.600], ['0 Bi', 153.600]];
const five = [['200 Bi', 27.600], ['150 Bi', 59.300], ['100 Bi', 90.600], ['50 Bi', 122.300], ['0 Bi', 153.600]];
const MB = 'medio_baixo', MA = 'medio_alto', B = 'baixo', A = 'alto';
const charts = [
  { t: 'Streams e Valence', tw: 124, tx: 107.500, c: 'b', h: 203, k: three, v: [33, 40, 43.500, 50], l: [MB, B, MA, A] },
  { t: 'Streams e Speechiness', tw: 157, tx: 108, c: 'c', h: 203, k: three, v: [27, 39, 40, 60.700], l: [B, MA, MB, A] },
  { t: 'Streams e Liveness', tw: 132, tx: 103.300, c: 'd', h: 203, k: three, v: [30.300, 42.300, 46.300, 48], l: [B, MA, A, MB] },
  { t: 'Streams e Instrumentalness', tw: 190.500, tx: 106.800, c: 'a', h: 213, k: threeB, v: [38, 38, 47.300, 49.500], l: [MB, B, A, MA] },
  { t: 'Streams e Energy', tw: 119.500, tx: 107.800, c: 'b', h: 213, k: threeB, v: [37, 43.300, 45.300, 47.300], l: [B, MB, A, MA] },
  { t: 'Streams e Danceability', tw: 153.700, tx: 108, c: 'c', h: 213, k: five, v: [64.600, 75.300, 76.600, 88.300], l: [B, MB, MA, A] },
  { t: 'Streams e Acousticness', tw: 161, tx: 103.300, c: 'd', h: 213, k: five, v: [62.800, 72.800, 84.800, 84.800], l: [B, A, MB, MA] }
];
const tickW = { '0 Bi': 14, '50 Bi': 18, '100 Bi': 22, '150 Bi': 22, '200 Bi': 22 };
const labW = { [MB]: 46, [MA]: 40, [B]: 20, [A]: 14 };
const grid = document.getElementById('grid');
for (const q of charts) {
  const c = cols[q.c];
  const base = q.k[q.k.length - 1][1];
  let s = `<text class="ct" x="${q.tx}" y="15" textLength="${q.tw}">${q.t}</text>`;
  for (const [n, y] of q.k) {
    s += `<line class="gl" x1="${c.grid[0]}" x2="${c.grid[1]}" y1="${Math.floor(y)}.5" y2="${Math.floor(y)}.5"/>`;
    s += `<text class="tk1" x="${c.tick}" y="${y + 2.6}" textLength="${tickW[n]}">${n}</text>`;
  }
  q.v.forEach((y, i) => {
    const x = c.bars[i], lx = x + c.bw / 2 - 3, ly = base + 8.5;
    s += `<rect class="bar" x="${x}" y="${y}" width="${c.bw}" height="${base + .4 - y}"/>`;
    s += `<text class="tk1" x="${lx}" y="${ly}" textLength="${labW[q.l[i]]}" transform="rotate(-34 ${lx} ${ly})">${q.l[i]}</text>`;
  });
  const my = q.h === 203 ? 85 : 90;
  s += `<text class="ax" x="13" y="${my}" textLength="37" transform="rotate(-90 13 ${my})">streams</text>`;
  s += `<text class="ax" x="${c.ax}" y="${q.h - 5.300}" textLength="41">categoria</text>`;
  const card = document.createElement('div');
  card.className = 'card';
  card.style.width = c.w + 'px';
  card.style.height = q.h + 'px';
  card.innerHTML = `<svg width="${c.w}" height="${q.h}" viewBox="0 0 ${c.w} ${q.h}">${s}</svg>`;
  grid.appendChild(card);
}
```
